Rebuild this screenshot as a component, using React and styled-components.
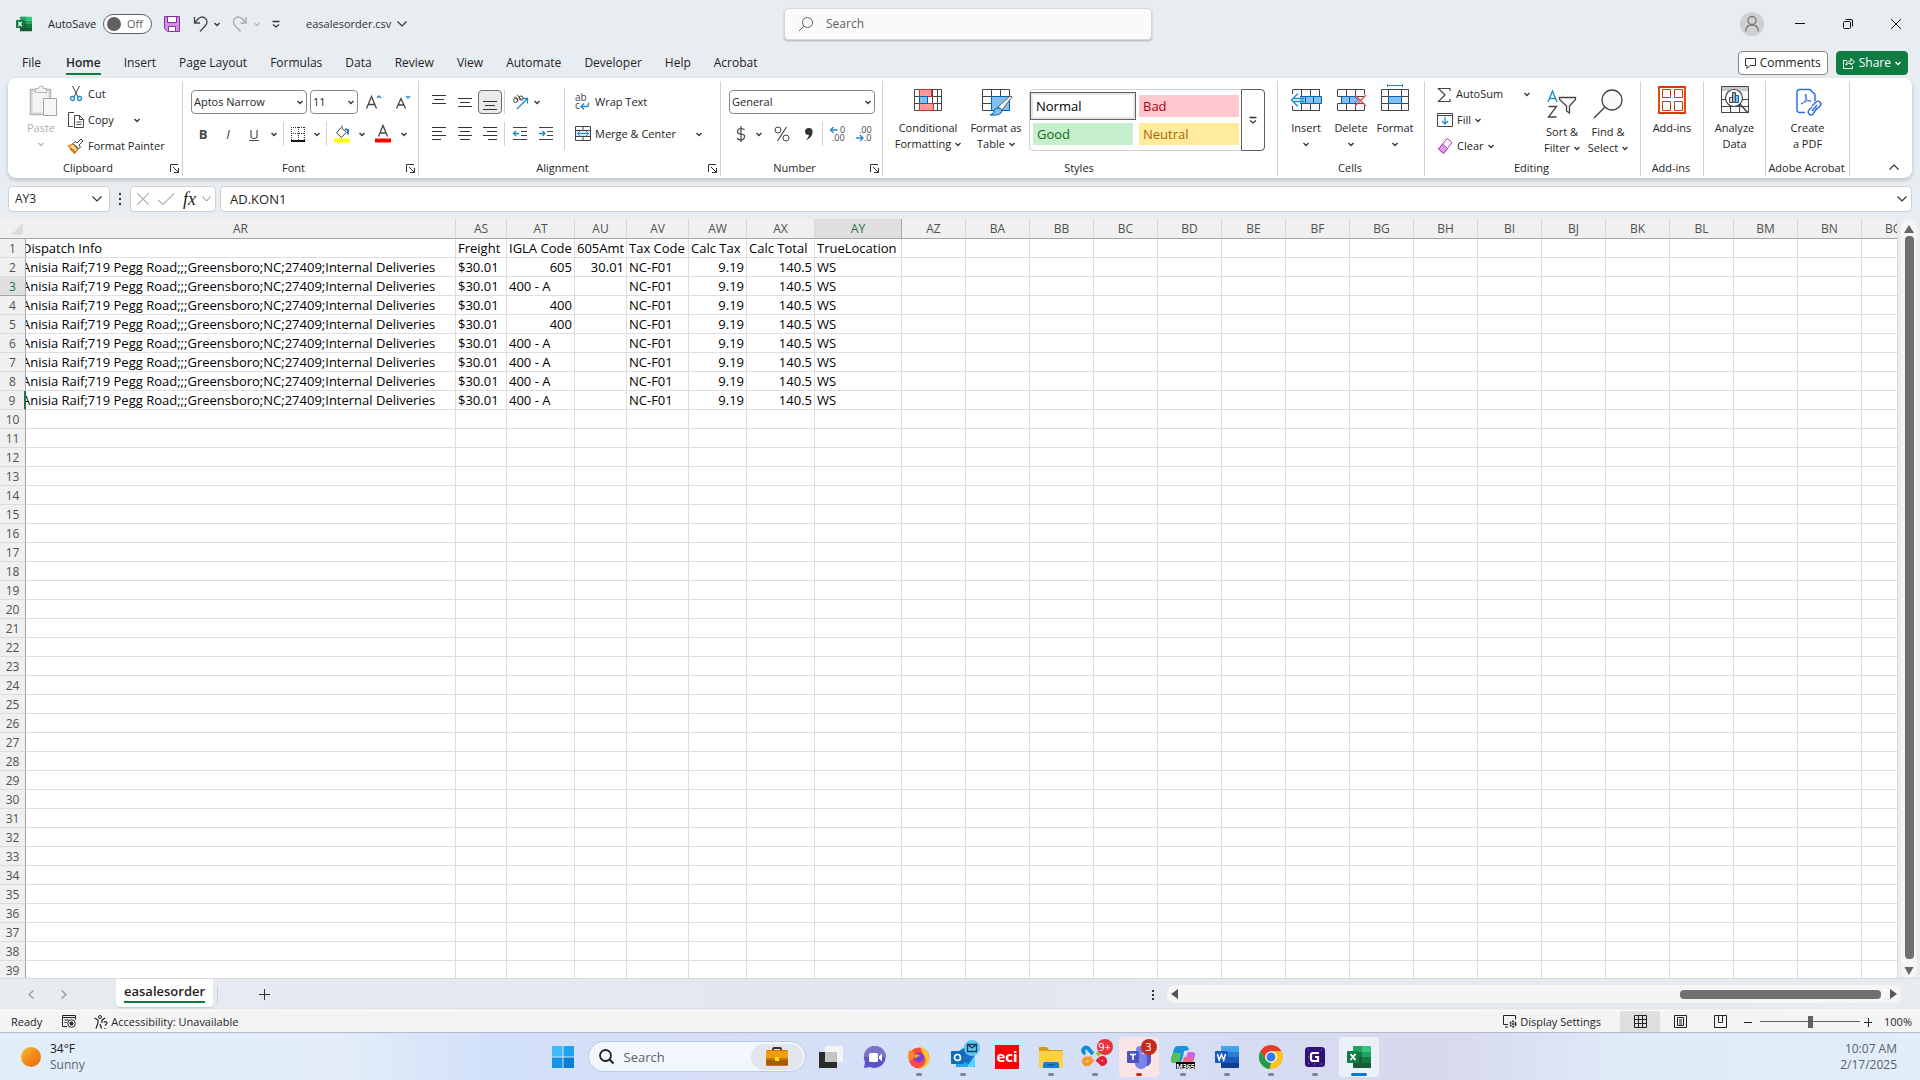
// src/App.jsx
import { useState } from "react";
import styled, { createGlobalStyle, css } from "styled-components";

const GlobalStyle = createGlobalStyle`
  *, *::before, *::after { box-sizing: border-box; }
  body {
    margin: 0;
    background: #e8edf1;
    color: #242424;
    font: 11px/16px "Open Sans", "Noto Sans", sans-serif;
  }
  button, input, select {
    font: inherit;
    color: inherit;
    background: none;
    border: 0;
    padding: 0;
    margin: 0;
    outline: 0;
  }
  svg { display: block; flex: none; overflow: visible; }
  svg text { font-family: "Open Sans", sans-serif; }
`;

const Window = styled.div`
  display: flex;
  flex-direction: column;
  height: 100vh;
  overflow: hidden;
`;

/* ---------- title bar ---------- */

const TitleBar = styled.header`
  display: grid;
  grid-template-columns: 1fr minmax(200px, 368px) 1fr;
  align-items: center;
  height: 48px;
  padding-left: 16px;
`;

const QuickAccess = styled.div`
  display: flex;
  align-items: center;
  gap: 12px;
`;

const AutoSave = styled.label`
  display: flex;
  align-items: center;
  gap: 7px;
  margin-left: 4px;
`;

const Toggle = styled.span`
  display: flex;
  align-items: center;
  gap: 6px;
  width: 49px;
  height: 20px;
  padding: 0 3px;
  border: 1px solid #616161;
  border-radius: 10px;
  background: #fff;
  color: #616161;

  input {
    appearance: none;
    width: 14px;
    height: 14px;
    border-radius: 50%;
    background: #616161;
  }
`;

const IconButton = styled.button`
  display: inline-flex;
  align-items: center;
  justify-content: center;
  gap: 6px;
  height: 24px;
  flex: none;
  width: ${({ $w }) => ($w ? `${$w}px` : "auto")};
  color: ${({ $dim }) => ($dim ? "#a8a8a8" : "#333")};
`;

const FileName = styled(IconButton)`
  margin-left: 14px;
`;

const TopSearch = styled.label`
  display: flex;
  align-items: center;
  gap: 13px;
  height: 32px;
  padding: 0 14px;
  border-radius: 4px;
  background: #fafafa;
  border: 1px solid #d5d8db;
  box-shadow: 0 1px 2px rgba(0, 0, 0, 0.25);
  font-size: 12px;
  color: #616161;

  input { flex: 1; min-width: 0; }
  input::placeholder { color: #616161; opacity: 1; }
`;

const WindowControls = styled.div`
  display: flex;
  justify-content: flex-end;
  align-items: center;
`;

const Avatar = styled.button`
  display: flex;
  align-items: center;
  justify-content: center;
  width: 24px;
  height: 24px;
  margin-right: 12px;
  border-radius: 50%;
  background: #d1d1d1;
  color: #777;
`;

const ControlButton = styled.button`
  display: flex;
  align-items: center;
  justify-content: center;
  width: 48px;
  height: 48px;
`;

/* ---------- tabs ---------- */

const TabRow = styled.nav`
  display: flex;
  align-items: center;
  height: 30px;
  padding: 0 12px 0 22px;
  font-size: 12px;
`;

const TabList = styled.div`
  display: flex;
  flex: 1;
  gap: 23px;
`;

const Tab = styled.button`
  height: 24px;
  line-height: 20px;
  border-top: 2px solid transparent;
  border-bottom: 2px solid ${({ $active }) => ($active ? "#107c41" : "transparent")};
  font-weight: ${({ $active }) => ($active ? 600 : 400)};

  &:first-child { margin-right: 2px; }
`;

const ActionButton = styled.button`
  display: flex;
  align-items: center;
  justify-content: center;
  gap: 4px;
  height: 24px;
  margin-left: 8px;
  padding: 0 ${({ $primary }) => ($primary ? 6 : 6)}px;
  border: 1px solid ${({ $primary }) => ($primary ? "#107c41" : "#8a8a8a")};
  border-radius: 4px;
  background: ${({ $primary }) => ($primary ? "#107c41" : "#fff")};
  color: ${({ $primary }) => ($primary ? "#fff" : "#242424")};
`;

/* ---------- ribbon ---------- */

const Ribbon = styled.section`
  display: flex;
  flex: none;
  height: 100px;
  margin: 0 8px;
  padding: 3px 0 2px;
  border-radius: 8px;
  background: #fff;
  box-shadow: 0 2px 4px rgba(0, 0, 0, 0.2);
`;

const Group = styled.div`
  display: flex;
  flex-direction: column;
  flex: none;
  width: ${({ $w }) => $w}px;
  border-right: 1px solid #d1d1d1;
`;

const GroupBody = styled.div`
  display: flex;
  flex: 1;
  padding-left: ${({ $pad = 0 }) => $pad}px;
  justify-content: ${({ $center }) => ($center ? "center" : "flex-start")};
`;

const GroupFooter = styled.div`
  display: flex;
  align-items: center;
  height: 16px;
  padding-right: 2px;

  span { flex: 1; text-align: center; white-space: nowrap; }
`;

const Rows = styled.div`
  display: flex;
  flex-direction: column;
  padding-top: ${({ $top = 0 }) => $top}px;
  padding-left: ${({ $left = 0 }) => $left}px;
`;

const Row = styled.div`
  display: flex;
  align-items: center;
  height: ${({ $h = 26 }) => $h}px;
  gap: ${({ $gap = 0 }) => $gap}px;
`;

const BigButton = styled.button`
  display: flex;
  flex-direction: column;
  align-items: center;
  flex: none;
  width: ${({ $w }) => $w}px;
  color: ${({ $dim }) => ($dim ? "#b0b0b0" : "#242424")};
  white-space: nowrap;

  > svg { margin: 3px 0 2px; }
  > span {
    display: flex;
    align-items: center;
    justify-content: center;
    gap: 4px;
    height: 16px;
  }
`;

const SmallButton = styled.button`
  display: flex;
  align-items: center;
  gap: 4px;
  height: 24px;
  width: ${({ $w }) => ($w ? `${$w}px` : "auto")};
  white-space: nowrap;
`;

const Glyph = styled.button`
  display: flex;
  align-items: center;
  justify-content: center;
  flex: none;
  width: ${({ $w = 26 }) => $w}px;
  height: 24px;
  font-size: 13px;
  color: #444;
  ${({ $pressed }) =>
    $pressed &&
    css`
      border: 1px solid #6e6e6e;
      border-radius: 4px;
      background: #ebebeb;
    `}
`;

const Divider = styled.span`
  width: 1px;
  height: ${({ $h = 24 }) => $h}px;
  margin: 0 ${({ $m = 2 }) => $m}px;
  background: #d1d1d1;
`;

const SelectBox = styled.span`
  display: flex;
  align-items: center;
  flex: none;
  width: ${({ $w }) => $w}px;
  height: 24px;
  padding: 0 3px 0 2px;
  border: 1px solid #8a8a8a;
  border-radius: 4px;

  select {
    flex: 1;
    min-width: 0;
    appearance: none;
  }
`;

const Gallery = styled.div`
  display: flex;
  height: 62px;
  margin: 8px 0 0 2px;
  border: 1px solid #d1d1d1;
  border-radius: 4px;
`;

const Tiles = styled.div`
  display: grid;
  grid-template-columns: 106px 100px;
  grid-template-rows: 28px 28px;
  column-gap: 3px;
  align-items: center;
  padding: 2px 3px 2px 0;
`;

const StyleTile = styled.button`
  height: 22px;
  margin: 0 ${({ $inset }) => ($inset ? 3 : 0)}px;
  padding-left: 4px;
  text-align: left;
  font-size: 13px;
  background: ${({ $bg }) => $bg};
  color: ${({ $fg }) => $fg};
  ${({ $selected }) =>
    $selected &&
    css`
      height: 28px;
      margin: 0;
      padding-left: 5px;
      border: 1px solid #616161;
      box-shadow: inset 0 0 0 2px #e6e6e6;
    `}
`;

const GalleryMore = styled.button`
  display: flex;
  align-items: center;
  justify-content: center;
  width: 24px;
  margin: -1px;
  border: 1px solid #616161;
  border-radius: 0 4px 4px 0;
`;

const CollapseRibbon = styled.button`
  display: flex;
  align-items: center;
  align-self: flex-end;
  height: 18px;
  margin: 0 13px 0 auto;
`;

/* ---------- formula bar ---------- */

const FormulaBar = styled.div`
  display: flex;
  align-items: center;
  padding: 8px 8px 7px;
`;

const BarBox = styled.div`
  display: flex;
  align-items: center;
  height: 26px;
  padding: 0 7px 0 6px;
  border: 1px solid #d1d1d1;
  border-radius: 4px;
  background: #fff;
  font-size: 12px;
  gap: 9px;
  width: ${({ $w }) => $w}px;

  input { flex: 1; min-width: 0; }
`;

const FormulaBox = styled(BarBox)`
  flex: 1;
  width: auto;
  margin-left: 4px;
  padding: 0 4px 0 9px;
  font-size: 13px;
`;

const BarDots = styled.span`
  width: 20px;
  display: flex;
  justify-content: center;
`;

/* ---------- grid ---------- */

const SheetArea = styled.main`
  display: flex;
  flex: 1;
  min-height: 0;
`;

const GridClip = styled.div`
  flex: 1;
  min-width: 0;
  overflow: hidden;
  background: #fff;
  border-right: 1px solid #dedede;
`;

const Sheet = styled.table`
  table-layout: fixed;
  border-collapse: separate;
  border-spacing: 0;
  width: ${({ $w }) => $w}px;
  font: 13px/17px "Open Sans", sans-serif;
  color: #000;
`;

const ColumnHead = styled.th`
  height: 20px;
  padding: 0;
  border-right: 1px solid ${({ $active }) => ($active ? "#a6a6a6" : "#d8d8d8")};
  border-bottom: 1px solid #a6a6a6;
  background: ${({ $active }) => ($active ? "#dfdfdf" : "#f0f0f0")};
  color: ${({ $active }) => ($active ? "#217346" : "#505050")};
  font: 12px/18px "Open Sans", sans-serif;
`;

const Corner = styled.th`
  height: 20px;
  padding: 0 3px 0 0;
  border-bottom: 1px solid #a6a6a6;
  background: #f0f0f0;

  svg { margin-left: auto; }
`;

const RowHead = styled.th`
  height: 19px;
  padding: 1px 0 0;
  border-right: ${({ $mark }) => ($mark ? "2px solid #217346" : "1px solid #a6a6a6")};
  border-bottom: 1px solid ${({ $active }) => ($active ? "#a6a6a6" : "#dcdcdc")};
  background: ${({ $active }) => ($active ? "#dfdfdf" : "#f0f0f0")};
  color: ${({ $active }) => ($active ? "#217346" : "#505050")};
  font: 12px/17px "Open Sans", sans-serif;
`;

const Cell = styled.td`
  height: 19px;
  padding: 1px 2px 0;
  border-right: 1px solid #dedede;
  border-bottom: 1px solid #dedede;
  text-align: ${({ $align = "left" }) => $align};
  text-indent: ${({ $scrolled }) => ($scrolled ? "-6px" : "0")};
  white-space: nowrap;
  overflow: hidden;
`;

const VScroll = styled.div`
  display: flex;
  flex-direction: column;
  align-items: center;
  gap: 3px;
  width: 16px;
  margin: 0 3px 0 3px;
  padding: 6px 0 2px;
  border-radius: 8px;
  background: #f5f5f5;
`;

const VThumb = styled.span`
  flex: 1;
  width: 9px;
  border-radius: 4px;
  background: #707070;
`;

/* ---------- sheet tabs and status ---------- */

const SheetBar = styled.div`
  display: flex;
  flex: none;
  height: 33px;
  padding: 0 19px;
  border-top: 1px solid #d9dcdf;
  border-bottom: 1px solid #fff;
  background: linear-gradient(90deg, #e8ecf1, #e3e6ee 45%, #e8ecf1);
`;

const SheetNav = styled.div`
  display: flex;
  align-items: center;
  gap: 9px;
  width: 97px;
`;

const SheetTab = styled.button`
  height: 28px;
  padding: 0 8px;
  border-radius: 0 0 4px 4px;
  background: #fff;
  font-size: 13px;
  font-weight: 600;
  box-shadow: 0 1px 1px rgba(0, 0, 0, 0.15);

  span {
    display: block;
    line-height: 20px;
    margin-bottom: 3px;
    border-bottom: 2px solid #107c41;
  }
`;

const SheetActions = styled.div`
  display: flex;
  align-items: center;
  flex: 1;
`;

const HScroll = styled.div`
  display: flex;
  align-items: center;
  width: 39%;
  height: 18px;
  margin: 6px 0 0 4px;
  padding: 0 4px;
  border-radius: 8px;
  background: #f5f5f5;
`;

const HThumb = styled.span`
  width: 201px;
  height: 9px;
  margin: 0 8px 0 auto;
  border-radius: 4px;
  background: #707070;
`;

const StatusBar = styled.footer`
  display: flex;
  flex: none;
  align-items: center;
  height: 21px;
  padding: 0 8px 0 11px;
  background: #f4f4f4;
`;

const StatusItem = styled.button`
  display: flex;
  align-items: center;
  gap: 3px;
  margin-right: ${({ $mr = 0 }) => $mr}px;
  margin-left: ${({ $push }) => ($push ? "auto" : "0")};
`;

const ZoomLevel = styled.button`
  width: 28px;
  margin-left: 12px;
  text-align: right;
`;

const ViewButton = styled.button`
  display: flex;
  align-items: center;
  justify-content: center;
  width: 40px;
  height: 21px;
  background: ${({ $active }) => ($active ? "#dedede" : "transparent")};
`;

const Zoom = styled.input`
  appearance: none;
  width: 100px;
  height: 12px;
  margin: 0 4px;
  background: linear-gradient(#616161, #616161) center / 100% 1px no-repeat;

  &::-webkit-slider-thumb {
    appearance: none;
    width: 5px;
    height: 12px;
    background: #616161;
  }
`;

/* ---------- taskbar ---------- */

const Taskbar = styled.div`
  display: grid;
  grid-template-columns: 1fr auto 1fr;
  flex: none;
  align-items: center;
  height: 48px;
  padding-left: 1px;
  border-top: 1px solid #b3bac8;
  background: linear-gradient(
    90deg,
    #e1eef8 0%,
    #e2edf8 18%,
    #d3e1fa 25%,
    #d6def6 38%,
    #d3e2f8 50%,
    #d6def4 62%,
    #d7d9ed 75%,
    #dfeaf7 84%,
    #e1eef8 100%
  );
`;

const Weather = styled.button`
  display: flex;
  align-items: center;
  gap: 9px;
  padding-left: 20px;
  text-align: left;
  font-size: 12px;
  color: #5f6670;

  b { display: block; font-weight: 400; color: #1b1b1b; }
`;

const Sun = styled.span`
  width: 20px;
  height: 20px;
  border-radius: 50%;
  background: linear-gradient(135deg, #f3c433, #f28a1b 50%, #ee6a0c);
`;

const Apps = styled.div`
  display: flex;
  align-items: center;
`;

const TaskButton = styled.button`
  display: flex;
  flex-direction: column;
  align-items: center;
  justify-content: center;
  position: relative;
  width: 40px;
  height: 40px;
  margin: 0 2px;
  border-radius: 4px;
  background: ${({ $bg = "transparent" }) => $bg};
`;

/* running marker under the icon */
const Dot = styled.span`
  position: absolute;
  bottom: 1px;
  width: ${({ $wide }) => ($wide ? 16 : 6)}px;
  height: 3px;
  border-radius: 2px;
  background: ${({ $color = "#7c8290" }) => $color};
`;

const Badge = styled.span`
  position: absolute;
  top: 2px;
  right: 2px;
  display: flex;
  align-items: center;
  justify-content: center;
  width: 16px;
  height: 16px;
  border-radius: 50%;
  background: ${({ $bg = "#c42b1c" }) => $bg};
  color: #fff;
  font-size: 11px;
`;

const TaskSearch = styled.label`
  display: flex;
  align-items: center;
  gap: 10px;
  width: 218px;
  height: 31px;
  margin: 0 3px;
  padding: 0 2px 0 10px;
  border: 1px solid #bccbe3;
  border-radius: 16px;
  background: #f2f6fd;
  font-size: 13px;

  input { flex: 1; min-width: 0; }
  input::placeholder { color: #5b5f66; opacity: 1; }
`;

const Highlight = styled.span`
  display: flex;
  align-items: center;
  justify-content: center;
  width: 52px;
  height: 26px;
  border-radius: 13px;
  background: #e2e6ec;
`;

const Clock = styled.time`
  padding-right: 23px;
  text-align: right;
  font-size: 12px;
  color: #5b6068;
`;

/* ---------- icons ---------- */

const Svg = ({ w = 16, h = w, vw = w, vh = h, children, ...rest }) => (
  <svg width={w} height={h} viewBox={`0 0 ${vw} ${vh}`} fill="none" stroke="#444" aria-hidden="true" {...rest}>
    {children}
  </svg>
);

const Chevron = ({ color = "#333" }) => (
  <Svg w={6} stroke={color}>
    <path d="M0.5 2 3 4.5 5.5 2" strokeWidth="1.3" />
  </Svg>
);

const BarChevron = ({ up }) => (
  <Svg w={10} h={6} stroke="#333">
    <path d={up ? "M0.5 5.5 5 1l4.5 4.5" : "M0.5 0.5 5 5 9.5 0.5"} strokeWidth="1.2" />
  </Svg>
);

const Launcher = () => (
  <IconButton $w={12} aria-label="More options">
    <Svg w={9} stroke="#333"><path d="M0.5 8V0.5H8M3 3l5 5M8.5 4v4.5H4" /></Svg>
  </IconButton>
);

const ExcelIcon = ({ size = 16 }) => (
  <Svg w={size} vw={24} vh={24} stroke="none">
    <path d="M6 1h9v6H6z" fill="#21a366" /><path d="M15 1h8a1 1 0 0 1 1 1v5h-9z" fill="#33c481" />
    <path d="M6 7h9v6H6z" fill="#107c41" /><path d="M15 7h9v5h-9z" fill="#21a366" />
    <path d="M6 12h9v11H7a1 1 0 0 1-1-1z" fill="#185c37" /><path d="M15 12h9v6h-9z" fill="#107c41" />
    <path d="M15 18h9v4a1 1 0 0 1-1 1h-8z" fill="#185c37" />
    <rect y="6" width="12" height="12" rx="1" fill="#107c41" />
    <path d="m3.500 9 5 6M8.500 9l-5 6" stroke="#fff" strokeWidth="1.800" />
  </Svg>
);

const WordIcon = () => (
  <Svg w={24} stroke="none">
    <path d="M6 1h17a1 1 0 0 1 1 1v5H6z" fill="#41a5ee" /><path d="M6 7h18v5H6z" fill="#2b7cd3" />
    <path d="M6 12h18v6H6z" fill="#185abd" /><path d="M6 18h18v4a1 1 0 0 1-1 1H7a1 1 0 0 1-1-1z" fill="#103f91" />
    <rect y="6" width="13" height="12" rx="1" fill="#185abd" />
    <path d="m2.500 9 1.700 6L6.500 9.500 8.700 15l1.800-6" stroke="#fff" strokeWidth="1.500" />
  </Svg>
);

const LinesIcon = ({ lines }) => (
  <Svg w={16} stroke="#333">
    {lines.map(([x, y, w]) => <path key={y} d={`M${x} ${y}.5h${w}`} />)}
  </Svg>
);

const ALIGN_TOP = [[1, 1, 14], [3, 5, 10], [1, 9, 14]];
const ALIGN_MIDDLE = [[1, 4, 14], [3, 8, 10], [1, 12, 14]];
const ALIGN_BOTTOM = [[1, 7, 14], [3, 11, 10], [1, 15, 14]];
const ALIGN_LEFT = [[1, 1, 14], [1, 5, 10], [1, 9, 14], [1, 13, 9]];
const ALIGN_CENTER = [[1, 1, 14], [3, 5, 10], [1, 9, 14], [3, 13, 10]];
const ALIGN_RIGHT = [[1, 1, 14], [5, 5, 10], [1, 9, 14], [6, 13, 9]];

const PasteIcon = () => (
  <Svg w={26} h={34} stroke="#b5b5b5">
    <path d="M2.500 5.500h20v25h-20z" fill="#e3e3e3" strokeWidth="1.500" />
    <path d="M5 8h15v20H5z" fill="#f3f3f3" stroke="none" />
    <path d="M7.500 8.500v-4h3a2.500 2.500 0 0 1 5 0h3v4z" fill="#f3f3f3" />
    <path d="M15.500 14.500h13v17h-13z" fill="#f6f6f6" stroke="#a5a5a5" />
  </Svg>
);

const CutIcon = () => (
  <Svg>
    <path d="m4.500 0 5.500 11M11.500 0 6 11" />
    <circle cx="4.500" cy="12.500" r="2" stroke="#1e8bcd" strokeWidth="1.300" /><circle cx="11.500" cy="12.500" r="2" stroke="#1e8bcd" strokeWidth="1.300" />
  </Svg>
);

const CopyIcon = () => (
  <Svg>
    <path d="M5 14.500H0.500v-14H6" />
    <path d="M6.500 3.500h5l4 4v8h-9zM11.500 3.500v4h4M8.500 10h5M8.500 12.500h5" fill="#fff" />
  </Svg>
);

const PainterIcon = () => (
  <Svg>
    <path d="M0.500 8 5 6l5 5-3.500 4.500z" fill="#fbd9ae" stroke="#e07a10" strokeWidth="1.300" />
    <path d="m2.500 10.500 4.500 4" stroke="#e07a10" strokeWidth="2.500" />
    <path d="m5 5.500 2-2 2 1.500 4-4 2 2-4 4 1.500 2-2 2z" fill="#fff" stroke="#444" /><path d="m7 7.500 3 3" />
  </Svg>
);

const BordersIcon = () => (
  <Svg w={16}>
    <path d="M1.500 1v13M8.500 1v13M14.500 1v13M1 1.500h14M1 7.500h14" stroke="#333" strokeDasharray="1 1" />
    <path d="M1 15h14" stroke="#111" strokeWidth="2" />
  </Svg>
);

const FillColorIcon = () => (
  <Svg w={16} h={18}>
    <path d="M7 2.500 2.500 8l5 4.500L12.500 7 8 3.500V0.500" /><path d="m11 4 3 1v4.500" stroke="#1e6fb8" strokeWidth="1.800" />
    <path d="M0 15.500h16" stroke="#ffff00" strokeWidth="4" />
  </Svg>
);

const FontColorIcon = () => (
  <Svg w={16} h={18}>
    <path d="M3.500 11.500 8 0.500l4.500 11M5 8h6" strokeWidth="1.300" />
    <path d="M0 15.500h16" stroke="#ff0000" strokeWidth="4" />
  </Svg>
);

const FontSizeIcon = ({ up }) => (
  <Svg w={16} h={16}>
    <path d={up ? "M0.500 14.500 5.500 2.500l5 12M2.500 10.500h6" : "M1.500 14.500 6 4.500l4.500 10M3 11h6"} strokeWidth="1.300" />
    <path d={up ? "m11 4 2-2 2 2" : "m11 2 2 2 2-2"} stroke="#1e8bcd" strokeWidth="1.300" />
  </Svg>
);

const OrientationIcon = () => (
  <Svg w={17}>
    <circle cx="3.500" cy="6.500" r="2" /><path d="M2 3.500q3-2 4 4" />
    <path d="m5 0.500 5 6" /><circle cx="9" cy="4" r="2" />
    <path d="M5 15 15 5M10.500 4.500H15.500V9.500" stroke="#1e8bcd" strokeWidth="1.300" />
  </Svg>
);

const IndentIcon = ({ right }) => (
  <Svg w={16}>
    <path d="M1 1.500h14M9 5.500h6M9 9.500h6M1 13.500h14" />
    <path d={right ? "M1 7.500h6M4.500 5l2.500 2.500L4.500 10" : "M1.500 7.500H7M4 5 1.500 7.500 4 10"} stroke="#1e8bcd" strokeWidth="1.300" />
  </Svg>
);

const WrapIcon = () => (
  <Svg w={16}>
    <text x="0" y="7" fontSize="10" fill="#444" stroke="none">ab</text>
    <text x="0" y="15" fontSize="10" fill="#444" stroke="none">c</text>
    <path d="M13.500 8.500v2q0 2-2 2H6.500M9 9.500l-3 3 3 3" stroke="#1e8bcd" strokeWidth="1.300" />
  </Svg>
);

const MergeIcon = () => (
  <Svg w={16}>
    <path d="M0.500 0.500h15v14h-15zM0.500 4.500h15M0.500 10.500h15M8 1v3M8 11v3" />
    <path d="M1 5h14v5H1z" fill="#d7ebfa" stroke="none" />
    <path d="M2.500 7.500h11M5 5 2.500 7.500 5 10M11 5l2.500 2.500L11 10" stroke="#1e8bcd" />
  </Svg>
);

const DecimalIcon = ({ up }) => (
  <Svg w={16}>
    <text x={up ? 10 : 3} y="7" fontSize="9" fill="#444" stroke="none">{up ? "0" : ".00"}</text>
    <text x={up ? 2 : 8} y="15" fontSize="9" fill="#444" stroke="none">{up ? ".00" : ".0"}</text>
    <path d={up ? "M0.500 4h7M3.500 1l-3 3 3 3" : "M0 12h7M4 9l3 3-3 3"} stroke="#1e8bcd" strokeWidth="1.300" />
  </Svg>
);

const ConditionalIcon = () => (
  <Svg w={28} h={34}>
    <path d="M0.500 5.500h27v21h-27zM0.500 12.500h27M0.500 19.500h27M5.500 5.500v21M18.500 5.500v21M23.500 5.500v21" stroke="#444" />
    <path d="M5.500 5.500h12v7h-12zM5.500 19.500h14v7h-14z" fill="#ff9a9c" stroke="#e02b20" /><path d="M5.500 12.500h8v7h-8z" fill="#83beec" stroke="#0063b1" />
  </Svg>
);

const FormatTableIcon = () => (
  <Svg w={28} h={34}>
    <path d="M0.500 5.500h27v21h-27zM0.500 12.500h27M0.500 19.500h27M9.500 5.500v21M18.500 5.500v21" />
    <path d="M9.500 12.500h18v14h-18z" fill="#83beec" stroke="#0063b1" />
    <path d="m28 12 2 1-10 13-4-3z" fill="#fff" stroke="#555" />
    <path d="M15 24q5 0 5 3-1 5-12 4 4-1 4-4 0-2 3-3z" fill="#83beec" stroke="#0063b1" />
  </Svg>
);

const InsertIcon = () => (
  <Svg w={32} h={34}>
    <path d="M2.500 5.500h27v21h-27zM11.500 5.500v21M20.500 5.500v21" fill="#fafafa" />
    <path d="M8.500 12.500h23v7h-23z" fill="#83beec" stroke="#0063b1" /><path d="M15.500 12.500v7M23.500 12.500v7" stroke="#0063b1" />
    <path d="M0 10h10v12H0z" fill="#fff" stroke="none" />
    <path d="M14 14.500H3M14 17.500H3M8 9.500 1.500 16 8 22.500" stroke="#1e8bcd" strokeWidth="1.400" />
  </Svg>
);

const DeleteIcon = () => (
  <Svg w={28} h={34}>
    <path d="M0.500 12.500v-7h27v5M0.500 19.500v7h27v-5M9.500 5.500v7M18.500 5.500v7M9.500 19.500v7M18.500 19.500v7M0.500 12.500h27M0.500 19.500h27" fill="#fafafa" />
    <path d="M4.500 12.500h13l4 3.500-4 3.500h-13zM12.500 12.500v7" fill="#83beec" stroke="#0063b1" />
    <path d="m18 11 11 11M29 11 18 22" stroke="#f04848" strokeWidth="1.400" />
  </Svg>
);

const FormatCellsIcon = () => (
  <Svg w={28} h={34}>
    <path d="M0.500 5.500h27v21h-27zM0.500 12.500h27M0.500 19.500h27M7.500 5.500v21M20.500 5.500v21" fill="#fafafa" />
    <path d="M7.500 12.500h13v7h-13z" fill="#83beec" stroke="#0063b1" />
    <path d="M6.500 1.500h15M6.500 0v3M21.500 0v3" stroke="#1e8bcd" />
  </Svg>
);

const SortIcon = () => (
  <Svg w={30} h={34}>
    <path d="m1 14 4.500-11L10 14M2.500 10.500h6" stroke="#1e8bcd" strokeWidth="1.400" />
    <path d="M1.500 18.500h8L1.500 29h8" strokeWidth="1.300" />
    <path d="M12.500 9.500h16v2l-6 6.500v7l-3-2v-5l-7-6.500z" fill="#fafafa" strokeWidth="1.300" />
  </Svg>
);

const FindIcon = () => (
  <Svg w={30} h={34}>
    <circle cx="19" cy="12" r="10" fill="#fafafa" strokeWidth="1.300" /><path d="M12 19 1 30" strokeWidth="1.400" />
  </Svg>
);

const AddInsIcon = () => (
  <Svg w={28} h={34} stroke="#d83b01">
    <path d="M1 3h26v26H1z" strokeWidth="1.800" />
    <path d="M4.500 5.500h8v8h-8zM16.500 5.500h8v8h-8zM4.500 17.500h8v9h-8zM16.500 17.500h8v9h-8z" />
  </Svg>
);

const AnalyzeIcon = () => (
  <Svg w={28} h={34}>
    <path d="M0.500 2.500h27v26h-27zM0.500 15.500h27M0.500 22.500h27M9.500 6v22M18.500 6v22" fill="#fafafa" />
    <path d="M1 3h26v4H1z" fill="#c8c8c8" stroke="none" />
    <circle cx="13" cy="14" r="8.500" fill="#fff" strokeWidth="1.200" /><path d="m19 20 8 9" strokeWidth="1.500" />
    <path d="M8.500 13.500h3v5h-3z" fill="#ddd" /><path d="M11.500 8.500h3v10h-3z" fill="#aaa" /><path d="M14.500 11.500h3v7h-3z" fill="#83beec" stroke="#0063b1" />
  </Svg>
);

const PdfIcon = () => (
  <Svg w={24} h={34} stroke="#2f6fe0">
    <path d="M9 28.500H3.500a2.500 2.500 0 0 1-2.500-2.500V8a2.500 2.500 0 0 1 2.500-2.500H14l5 5V17" strokeWidth="1.500" />
    <path d="M5 20c4-1 6-6 5-10-2 1 1 8 5 7-3-1-7 1-10 3z" />
    <path d="m16 22 4-4a2.500 2.500 0 0 1 4 4l-3 3M21 24l-4 6a2.500 2.500 0 0 1-4-4l3-3M16 27l5-6" strokeWidth="1.500" />
  </Svg>
);

const SumIcon = () => (
  <Svg w={15}><path d="M13 4V1.500H1.500L8 8l-6.500 6.500H13V12" strokeWidth="1.200" /></Svg>
);
const FillIcon = () => (
  <Svg w={16} h={14}>
    <path d="M0.500 0.500h15v13h-15zM0.500 2.500h15" /><path d="M8 4v7M5 8l3 3 3-3" stroke="#1e8bcd" strokeWidth="1.300" />
  </Svg>
);
const ClearIcon = () => (
  <Svg w={16}>
    <path d="m10 0.500 5 4-8.500 11-5-4.500z" fill="#fff" stroke="#a33eb0" /><path d="m5.500 6 5 4.500-4 5-5-4.500z" fill="#dc9be0" stroke="#a33eb0" />
  </Svg>
);

const BriefcaseIcon = () => (
  <Svg w={24} h={20} stroke="none">
    <path d="M8 3.500V2q0-1 1-1h6q1 0 1 1v1.500" stroke="#4a2c14" strokeWidth="1.800" />
    <rect x="1" y="3" width="22" height="16" rx="1.500" fill="#c8780a" /><path d="M1 4h22v7H1z" fill="#f39c12" />
    <path d="M1 13h22v5H1z" fill="#a55c08" /><rect x="10" y="10" width="4" height="4" fill="#ffe500" />
  </Svg>
);

const StartIcon = () => (
  <Svg w={24} stroke="none">
    <path d="M1 1h10.500v10.500H1z" fill="#3ebcf5" /><path d="M12.500 1H23v10.500H12.500z" fill="#21a3ec" />
    <path d="M1 12.500h10.500V23H1z" fill="#1496e4" /><path d="M12.500 12.500H23V23H12.500z" fill="#0a7fd8" />
  </Svg>
);

const TaskViewIcon = () => (
  <Svg w={24} stroke="none">
    <path d="M0 7h18v16H0z" fill="#2b2b2b" /><path d="M6 1h18v16H6z" fill="#f4f4f4" />
    <path d="M6 7h12v10H6z" fill="#c2c4c7" />
  </Svg>
);

const ChatIcon = () => (
  <Svg w={24} stroke="none">
    <path d="M12 1a11 11 0 1 1-5 21l-6 1 1-6A11 11 0 0 1 12 1z" fill="#5b52cc" />
    <path d="M12 1a11 11 0 0 1 11 11H1A11 11 0 0 1 12 1z" fill="#7a74c8" />
    <rect x="6" y="8" width="9" height="9" rx="1.500" fill="#fff" /><path d="m16 11.500 3-3v8l-3-3z" fill="#fff" />
  </Svg>
);

const FirefoxIcon = () => (
  <Svg w={24} stroke="none">
    <circle cx="12" cy="13" r="10.500" fill="#ff4a3d" />
    <path d="M14 0c1 3 5 4 7 8s2 9-1 12-6 4-9 3c6-1 9-5 7-11-1-3-5-6-4-12z" fill="#ffc52e" />
    <path d="M2 5c2 1 3 2 6 2-2 2-2 3 0 4l-3 4-3 1c-1-4-1-8 0-11z" fill="#ff8a1c" />
    <circle cx="12" cy="12.500" r="5" fill="#7a3fd6" /><path d="M7 10c2-1 5-1 6 1-2 0-3 1-3 2-2 0-3-1-3-3z" fill="#ff9a1f" />
  </Svg>
);

const OutlookIcon = () => (
  <Svg w={24} stroke="none">
    <path d="M5 8 14 2l10 6v14H5z" fill="#1a6fc4" /><path d="M5 13l19 9H7q-2 0-2-2z" fill="#28a8ea" /><path d="M24 10v10q0 2-2 2h-6z" fill="#50d9ff" />
    <rect y="6" width="13" height="13" rx="1" fill="#0f6cbd" /><circle cx="6.500" cy="12.500" r="3" stroke="#fff" strokeWidth="1.700" />
    <circle cx="21" cy="3" r="8" fill="#5cc6ee" /><path d="M16.500-0.500h9v7h-9zM16.500-0.500 21 3l4.500-3.500" stroke="#173a55" strokeWidth="1.300" />
  </Svg>
);

const EciIcon = () => (
  <Svg w={24} stroke="none">
    <path d="M0 0h24v24H0z" fill="#f60505" />
    <text x="12" y="17" fontSize="15" fontWeight="700" textAnchor="middle" fill="#fff">eci</text>
  </Svg>
);

const ExplorerIcon = () => (
  <Svg w={24} stroke="none">
    <path d="M0 3q0-1 1-1h7l2 3h13q1 0 1 1v3H0z" fill="#dd9a0a" /><path d="M0 6h24v16q0 1-1 1H1q-1 0-1-1z" fill="#fdd04a" />
    <path d="M4 23v-4q0-2 2-2h12q2 0 2 2v4z" fill="#1681cf" /><path d="M8 19h8v1.500H8z" fill="#0b5f9e" />
  </Svg>
);

const PetalsIcon = () => (
  <Svg w={24} strokeWidth="4">
    <path d="M10 9 6 4.500a3 3 0 1 0-3.500 4" stroke="#0f8fd0" />
    <path d="m10 14-4 4.500a3 3 0 1 1-3-5h6" stroke="#f8982a" /><path d="m14 14 5 5a3 3 0 1 0-2-5" stroke="#e81e35" />
    <path d="m14 10 3-3" stroke="#8cc63f" />
  </Svg>
);

const TeamsIcon = () => (
  <Svg w={24} stroke="none">
    <circle cx="13" cy="5" r="4" fill="#7b83eb" /><path d="M14 9h10v7a5 5 0 0 1-6 5z" fill="#5059c9" />
    <path d="M7 9h13v8a6 6 0 0 1-12 2z" fill="#7b83eb" /><rect y="6" width="12" height="12" rx="1" fill="#4b53bc" />
    <path d="M3 9.500h6M6 9.500V15" stroke="#fff" strokeWidth="1.600" />
  </Svg>
);

const CopilotIcon = () => (
  <Svg w={24} stroke="none">
    <path d="M7 1h8q2 0 3 4l-5 1q-1 9-4 12H4q-5 0-4-4L3 4q1-3 4-3z" fill="#1691dd" />
    <path d="M2 8h8L8 18H4q-5 0-4-4z" fill="#54c351" /><path d="M17 7h4q4 0 3 4l-2 6q-1 3-4 3h-6z" fill="#c663e8" />
    <path d="M13 12h9l-3 7h-8z" fill="#f2668c" />
    <path d="M5 17h19v7H5z" fill="#000" />
    <text x="14.500" y="23.500" fontSize="7" fontWeight="700" textAnchor="middle" fill="#fff">M365</text>
  </Svg>
);

const ChromeIcon = () => (
  <Svg w={24} stroke="none">
    <circle cx="12" cy="12" r="12" fill="#fcc31e" /><path d="M12 0a12 12 0 0 1 10.400 6H12L6.800 15 1.600 6A12 12 0 0 1 12 0z" fill="#e33b2e" />
    <path d="m1.600 6 5.200 9 5.200 3-1.500 6A12 12 0 0 1 1.600 6z" fill="#229a49" />
    <circle cx="12" cy="12" r="5.800" fill="#fff" /><circle cx="12" cy="12" r="4.500" fill="#2f7ded" />
  </Svg>
);

const GIcon = () => (
  <Svg w={20} stroke="none">
    <rect width="20" height="20" rx="3.500" fill="#32107a" />
    <path d="M14 6H8Q6 6 6 8v4q0 2 2 2h5v-4h-3" stroke="#fff" strokeWidth="2.200" />
    <path d="M3 3h1M16 3h1M3 16h1M16 17h1M3 10h1M9 17h1" stroke="#a98be0" />
  </Svg>
);

/* ---------- data ---------- */

const TABS = ["File", "Home", "Insert", "Page Layout", "Formulas", "Data", "Review", "View", "Automate", "Developer", "Help", "Acrobat"];

const COLUMNS = [
  ["AR", 430], ["AS", 51], ["AT", 68], ["AU", 52], ["AV", 62], ["AW", 58], ["AX", 68], ["AY", 87],
  ...["AZ", "BA", "BB", "BC", "BD", "BE", "BF", "BG", "BH", "BI", "BJ", "BK", "BL", "BM", "BN", "BO"].map((c) => [c, 64]),
];
const SHEET_WIDTH = COLUMNS.reduce((sum, [, w]) => sum + w, 26);

const HEADINGS = ["Dispatch Info", "Freight", "IGLA Code", "605Amt", "Tax Code", "Calc Tax", "Calc Total", "TrueLocation"];
const DISPATCH = "Anisia Raif;719 Pegg Road;;;Greensboro;NC;27409;Internal Deliveries";
const order = (code, amount = "") => [DISPATCH, "$30.01", code, amount, "NC-F01", 9.19, 140.5, "WS"];

const ROWS = [
  HEADINGS,
  order(605, 30.01),
  order("400 - A"),
  order(400),
  order(400),
  order("400 - A"),
  order("400 - A"),
  order("400 - A"),
  order("400 - A"),
];
const ROW_COUNT = 39;

/* ---------- sections ---------- */

function Title() {
  return (
    <TitleBar>
      <QuickAccess>
        <ExcelIcon />
        <AutoSave>
          AutoSave
          <Toggle><input type="checkbox" />Off</Toggle>
        </AutoSave>
        <IconButton $w={16} aria-label="Save">
          <Svg stroke="#8a2da5">
            <path d="M0.500 0.500h15v15h-12l-3-3z" fill="#d58fe0" /><path d="M3.500 0.500h9v6h-9z" fill="#fff" /><path d="M4.500 15.500v-5h7v5z" fill="#fff" />
          </Svg>
        </IconButton>
        <IconButton aria-label="Undo">
          <Svg><path d="M2.500 1v6H8M2.500 7 6.500 2.500q4-3 7 0t0 7L8 15.500" strokeWidth="1.300" /></Svg>
          <Chevron />
        </IconButton>
        <IconButton $dim aria-label="Redo">
          <Svg stroke="#a8a8a8"><path d="M14 1v6H8.500M14 7 10 2.500Q6-0.500 3 2.500t0 7l5.500 6" strokeWidth="1.300" /></Svg>
          <Chevron color="#b8b8b8" />
        </IconButton>
        <IconButton $w={8} aria-label="Customize toolbar">
          <Svg w={8} stroke="#333"><path d="M0.500 1.500h7M1 4.500l3 2.500 3-2.500" strokeWidth="1.300" /></Svg>
        </IconButton>
        <FileName>easalesorder.csv<BarChevron /></FileName>
      </QuickAccess>
      <TopSearch>
        <Svg w={14} stroke="#616161"><circle cx="8.500" cy="5.500" r="5" /><path d="M5 9 0 14" /></Svg>
        <input type="search" placeholder="Search" aria-label="Search" />
      </TopSearch>
      <WindowControls>
        <Avatar aria-label="Account">
          <Svg w={14} h={16} stroke="#777"><circle cx="7" cy="4.500" r="4" strokeWidth="1.300" /><path d="M0.500 15.500Q1 9 7 9t6.500 6.500" strokeWidth="1.300" /></Svg>
        </Avatar>
        <ControlButton aria-label="Minimize"><Svg w={10} stroke="#111"><path d="M0 4.500h10" /></Svg></ControlButton>
        <ControlButton aria-label="Restore"><Svg w={10} stroke="#111"><rect x="0.500" y="2.500" width="7" height="7" rx="1" /><path d="M2.500 0.500H8q1.500 0 1.500 1.500v5.500" /></Svg></ControlButton>
        <ControlButton aria-label="Close"><Svg w={10} stroke="#111"><path d="m0 0 10 10M10 0 0 10" /></Svg></ControlButton>
      </WindowControls>
    </TitleBar>
  );
}

function RibbonTabs() {
  const [active, setActive] = useState("Home");
  return (
    <TabRow>
      <TabList>
        {TABS.map((tab) => (
          <Tab key={tab} $active={tab === active} onClick={() => setActive(tab)}>{tab}</Tab>
        ))}
      </TabList>
      <ActionButton>
        <Svg w={11} stroke="#333"><path d="M0.500 0.500h10v7H5l-3 3v-3H0.500z" /></Svg>
        Comments
      </ActionButton>
      <ActionButton $primary>
        <Svg w={12} stroke="#fff"><path d="M4 3.500H0.500v8h9V9M3 8q0-4 5-4V1.500L11.500 5 8 8V6Q5 6 3 8z" /></Svg>
        Share
        <Chevron color="#fff" />
      </ActionButton>
    </TabRow>
  );
}

const Drop = ({ w = 14, label = "More" }) => <Glyph $w={w} aria-label={label}><Chevron /></Glyph>;

function RibbonGroup({ name, width, pad, center, launcher, children }) {
  return (
    <Group $w={width}>
      <GroupBody $pad={pad} $center={center}>{children}</GroupBody>
      <GroupFooter><span>{name}</span>{launcher && <Launcher />}</GroupFooter>
    </Group>
  );
}

function RibbonPanel() {
  return (
    <Ribbon>
      <RibbonGroup name="Clipboard" width={175} pad={10} launcher>
        <BigButton $w={46} $dim><PasteIcon /><span>Paste</span><span><Chevron color="#b8b8b8" /></span></BigButton>
        <Rows $left={4}>
          <Row><SmallButton><CutIcon />Cut</SmallButton></Row>
          <Row $gap={16}><SmallButton><CopyIcon />Copy</SmallButton><Drop /></Row>
          <Row><SmallButton><PainterIcon />Format Painter</SmallButton></Row>
        </Rows>
      </RibbonGroup>

      <RibbonGroup name="Font" width={236} pad={8} launcher>
        <Rows $top={5}>
          <Row $h={32} $gap={3}>
            <SelectBox $w={116}>
              <select aria-label="Font"><option>Aptos Narrow</option></select><Chevron />
            </SelectBox>
            <SelectBox $w={48}>
              <select aria-label="Font size"><option>11</option></select><Chevron />
            </SelectBox>
            <Glyph aria-label="Increase font size"><FontSizeIcon up /></Glyph>
            <Glyph aria-label="Decrease font size"><FontSizeIcon /></Glyph>
          </Row>
          <Row $h={32}>
            <Glyph $w={24}><b>B</b></Glyph>
            <Glyph><i>I</i></Glyph>
            <Glyph><u>U</u></Glyph>
            <Drop />
            <Divider />
            <Glyph $w={24} aria-label="Borders"><BordersIcon /></Glyph>
            <Drop />
            <Divider />
            <Glyph $w={26} aria-label="Fill color"><FillColorIcon /></Glyph>
            <Drop />
            <Glyph $w={28} aria-label="Font color"><FontColorIcon /></Glyph>
            <Drop />
          </Row>
        </Rows>
      </RibbonGroup>

      <RibbonGroup name="Alignment" width={302} pad={7} launcher>
        <Rows $top={5}>
          <Row $h={32}>
            <Glyph aria-label="Top align"><LinesIcon lines={ALIGN_TOP} /></Glyph>
            <Glyph aria-label="Middle align"><LinesIcon lines={ALIGN_MIDDLE} /></Glyph>
            <Glyph $w={24} $pressed aria-label="Bottom align"><LinesIcon lines={ALIGN_BOTTOM} /></Glyph>
            <Divider />
            <Glyph aria-label="Orientation"><OrientationIcon /></Glyph>
            <Drop w={8} />
          </Row>
          <Row $h={32}>
            <Glyph aria-label="Align left"><LinesIcon lines={ALIGN_LEFT} /></Glyph>
            <Glyph aria-label="Center"><LinesIcon lines={ALIGN_CENTER} /></Glyph>
            <Glyph $w={24} aria-label="Align right"><LinesIcon lines={ALIGN_RIGHT} /></Glyph>
            <Divider />
            <Glyph aria-label="Decrease indent"><IndentIcon /></Glyph>
            <Glyph aria-label="Increase indent"><IndentIcon right /></Glyph>
          </Row>
        </Rows>
        <Row $h={76}><Divider $h={62} $m={5} /></Row>
        <Rows $top={5} $left={5}>
          <Row $h={32}><SmallButton><WrapIcon />Wrap Text</SmallButton></Row>
          <Row $h={32} $gap={16}><SmallButton><MergeIcon />Merge &amp; Center</SmallButton><Drop /></Row>
        </Rows>
      </RibbonGroup>

      <RibbonGroup name="Number" width={162} pad={8} launcher>
        <Rows $top={5}>
          <Row $h={32}>
            <SelectBox $w={146}>
              <select aria-label="Number format"><option>General</option></select><Chevron />
            </SelectBox>
          </Row>
          <Row $h={32}>
            <Glyph $w={23} aria-label="Currency"><Svg w={10} h={18}><path d="M8.500 5Q8 3.500 5 3.500T1.500 6.200 5 9t3.500 3T5 15t-3.500-2M5 1v16" strokeWidth="1.200" /></Svg></Glyph>
            <Drop />
            <Glyph $w={32} aria-label="Percent"><Svg w={16}><circle cx="4" cy="4" r="3" /><circle cx="12" cy="12" r="3" /><path d="M12.500 1 3.500 15" strokeWidth="1.200" /></Svg></Glyph>
            <Glyph $w={22} aria-label="Comma"><Svg w={8} h={14} stroke="none"><path d="M4 1q4 0 3.500 4.500Q7 11 1 13q3-3 3-5-4 0-4-3.500T4 1z" fill="#333" /></Svg></Glyph>
            <Divider />
            <Glyph aria-label="Increase decimal"><DecimalIcon up /></Glyph>
            <Glyph aria-label="Decrease decimal"><DecimalIcon /></Glyph>
          </Row>
        </Rows>
      </RibbonGroup>

      <RibbonGroup name="Styles" width={395} pad={8}>
        <BigButton $w={74}><ConditionalIcon /><span>Conditional</span><span>Formatting <Chevron /></span></BigButton>
        <BigButton $w={62}><FormatTableIcon /><span>Format as</span><span>Table <Chevron /></span></BigButton>
        <Gallery>
          <Tiles>
            <StyleTile $selected $bg="#fff" $fg="#000">Normal</StyleTile>
            <StyleTile $bg="#ffc7ce" $fg="#b0000c">Bad</StyleTile>
            <StyleTile $inset $bg="#c6efce" $fg="#0d6b10">Good</StyleTile>
            <StyleTile $bg="#ffeb9c" $fg="#a8640a">Neutral</StyleTile>
          </Tiles>
          <GalleryMore aria-label="More styles">
            <Svg w={8} stroke="#333"><path d="M0.500 1.500h7M1 4.500l3 2.500 3-2.500" strokeWidth="1.300" /></Svg>
          </GalleryMore>
        </Gallery>
      </RibbonGroup>

      <RibbonGroup name="Cells" width={147} pad={6}>
        <BigButton $w={44}><InsertIcon /><span>Insert</span><span><Chevron /></span></BigButton>
        <BigButton $w={46}><DeleteIcon /><span>Delete</span><span><Chevron /></span></BigButton>
        <BigButton $w={42}><FormatCellsIcon /><span>Format</span><span><Chevron /></span></BigButton>
      </RibbonGroup>

      <RibbonGroup name="Editing" width={216} pad={12}>
        <Rows>
          <Row $gap={12}><SmallButton $w={71}><SumIcon />AutoSum</SmallButton><Drop /></Row>
          <Row><SmallButton><FillIcon />Fill <Chevron /></SmallButton></Row>
          <Row><SmallButton><ClearIcon />Clear <Chevron /></SmallButton></Row>
        </Rows>
        <Row $h={79} $gap={0}>
          <Divider $h={0} />
          <BigButton $w={46}><SortIcon /><span>Sort &amp;</span><span>Filter <Chevron /></span></BigButton>
          <BigButton $w={46}><FindIcon /><span>Find &amp;</span><span>Select <Chevron /></span></BigButton>
        </Row>
      </RibbonGroup>

      <RibbonGroup name="Add-ins" width={63} center>
        <BigButton $w={50}><AddInsIcon /><span>Add-ins</span></BigButton>
      </RibbonGroup>
      <RibbonGroup name="" width={62} center>
        <BigButton $w={50}><AnalyzeIcon /><span>Analyze</span><span>Data</span></BigButton>
      </RibbonGroup>
      <RibbonGroup name="Adobe Acrobat" width={84} center>
        <BigButton $w={50}><PdfIcon /><span>Create</span><span>a PDF</span></BigButton>
      </RibbonGroup>
      <CollapseRibbon aria-label="Collapse ribbon"><BarChevron up /></CollapseRibbon>
    </Ribbon>
  );
}

const FunctionMark = styled.span`
  font: italic 18px/20px "Liberation Serif", serif;
  color: #222;
`;

function Formula() {
  const [formula, setFormula] = useState("AD.KON1");
  return (
    <FormulaBar>
      <BarBox $w={102}>
        <input aria-label="Name box" defaultValue="AY3" />
        <BarChevron />
      </BarBox>
      <BarDots><Svg w={2} h={12} fill="#333" stroke="none"><path d="M0 0h2v2H0zM0 5h2v2H0zM0 10h2v2H0z" /></Svg></BarDots>
      <BarBox $w={86}>
        <IconButton $w={12} aria-label="Cancel"><Svg w={12} stroke="#b5b5b5"><path d="m0 0 12 12M12 0 0 12" strokeWidth="1.200" /></Svg></IconButton>
        <IconButton $w={16} aria-label="Enter"><Svg w={16} h={12} stroke="#b5b5b5"><path d="m0 7 5 4.500L16 0.500" strokeWidth="1.200" /></Svg></IconButton>
        <IconButton aria-label="Insert function">
          <FunctionMark>fx</FunctionMark>
          <Svg w={9} h={6} stroke="#888"><path d="M0.500 0.500 4.500 5l4-4.500" /></Svg>
        </IconButton>
      </BarBox>
      <FormulaBox>
        <input aria-label="Formula" value={formula} onChange={(e) => setFormula(e.target.value)} />
        <BarChevron />
      </FormulaBox>
    </FormulaBar>
  );
}

function Grid() {
  return (
    <SheetArea>
      <GridClip>
        <Sheet $w={SHEET_WIDTH}>
          <colgroup>
            <col width={26} />
            {COLUMNS.map(([name, width]) => <col key={name} width={width} />)}
          </colgroup>
          <thead>
            <tr>
              <Corner><Svg w={12} stroke="none"><path d="M12 0v12H0z" fill="#dcdcdc" /></Svg></Corner>
              {COLUMNS.map(([name]) => <ColumnHead key={name} $active={name === "AY"}>{name}</ColumnHead>)}
            </tr>
          </thead>
          <tbody>
            {Array.from({ length: ROW_COUNT }, (_, r) => (
              <tr key={r}>
                <RowHead $active={r === 2} $mark={r === 8}>{r + 1}</RowHead>
                {COLUMNS.map(([name], c) => {
                  const value = ROWS[r]?.[c] ?? "";
                  const align = typeof value === "number" ? "right" : "left";
                  return <Cell key={name} $align={align} $scrolled={c === 0}>{value}</Cell>;
                })}
              </tr>
            ))}
          </tbody>
        </Sheet>
      </GridClip>
      <VScroll>
        <Svg w={10} h={8} stroke="none"><path d="m5 0 5 8H0z" fill="#666" /></Svg>
        <VThumb />
        <Svg w={10} h={14} stroke="none"><path d="m5 13 4.500-8h-9z" fill="#666" /></Svg>
      </VScroll>
    </SheetArea>
  );
}

function SheetTabs() {
  return (
    <SheetBar>
      <SheetNav>
        <IconButton $w={24} aria-label="Previous sheet"><Svg w={6} h={9} stroke="#999"><path d="M5.500 0.500 1 4.500l4.500 4" strokeWidth="1.300" /></Svg></IconButton>
        <IconButton $w={24} aria-label="Next sheet"><Svg w={6} h={9} stroke="#999"><path d="M0.500 0.500 5 4.500l-4.500 4" strokeWidth="1.300" /></Svg></IconButton>
      </SheetNav>
      <SheetTab><span>easalesorder</span></SheetTab>
      <SheetActions>
        <Divider $h={18} $m={4} />
        <IconButton $w={84} aria-label="New sheet"><Svg w={11} stroke="#333"><path d="M0 5.500h11M5.500 0v11" /></Svg></IconButton>
      </SheetActions>
      <BarDots><Svg w={2} h={32} fill="#333" stroke="none"><path d="M0 11h2v2H0zM0 15h2v2H0zM0 19h2v2H0z" /></Svg></BarDots>
      <HScroll>
        <Svg w={8} h={10} stroke="none"><path d="M0 5 7 0v10z" fill="#555" /></Svg>
        <HThumb />
        <Svg w={8} h={10} stroke="none"><path d="M8 5 1 0v10z" fill="#555" /></Svg>
      </HScroll>
    </SheetBar>
  );
}

function Status() {
  return (
    <StatusBar>
      <StatusItem $mr={20}>Ready</StatusItem>
      <StatusItem $mr={18} aria-label="Record macro">
        <Svg w={14} h={13} stroke="#222"><path d="M5 11.500H0.500V0.500h13v4M0.500 2.500h13M2.500 5h4M2.500 7.500h2" /><circle cx="9.500" cy="8.500" r="3.800" /><circle cx="9.500" cy="8.500" r="1.600" fill="#222" /></Svg>
      </StatusItem>
      <StatusItem>
        <Svg w={14} stroke="#222"><circle cx="6" cy="2" r="1.500" /><path d="M0.500 3 4 5v3l-2 5.500M11 3 8 5v3M6 9l1.500 4.500M10 7.500Q11 6 12.500 7t-1.500 3.500M11 13v1" strokeWidth="1.200" /></Svg>
        Accessibility: Unavailable
      </StatusItem>
      <StatusItem $push $mr={19}>
        <Svg w={14} h={13} stroke="#222"><path d="M5 9.500H0.500v-9h12v4M2 12h3" /><circle cx="10" cy="9" r="2.800" strokeDasharray="2 1" strokeWidth="1.500" /><circle cx="10" cy="9" r="1" /></Svg>
        Display Settings
      </StatusItem>
      <ViewButton $active aria-label="Normal view"><Svg w={13} stroke="#222"><path d="M0.500 0.500h12v12h-12zM0.500 4.500h12M0.500 8.500h12M4.500 0.500v12M8.500 0.500v12" /></Svg></ViewButton>
      <ViewButton aria-label="Page layout"><Svg w={13} stroke="#222"><path d="M0.500 0.500h12v12h-12zM3.500 2.500h6v8h-6zM5 5h3M5 7h3M5 9h3" /></Svg></ViewButton>
      <ViewButton aria-label="Page break preview"><Svg w={13} stroke="#222"><path d="M0.500 0.500h12v12h-12zM4.500 0.500v7h4v-7" /></Svg></ViewButton>
      <IconButton $w={16} aria-label="Zoom out"><Svg w={8} stroke="#222"><path d="M0 4.500h8" /></Svg></IconButton>
      <Zoom type="range" min="10" max="190" defaultValue="100" aria-label="Zoom" />
      <IconButton $w={8} aria-label="Zoom in"><Svg w={8} stroke="#222"><path d="M0 4.500h8M4.500 0v9" /></Svg></IconButton>
      <ZoomLevel>100%</ZoomLevel>
    </StatusBar>
  );
}

const RUNNING = [
  { name: "Task view", icon: <TaskViewIcon />, idle: true },
  { name: "Chat", icon: <ChatIcon />, idle: true },
  { name: "Firefox", icon: <FirefoxIcon /> },
  { name: "Outlook", icon: <OutlookIcon /> },
  { name: "ECI", icon: <EciIcon />, idle: true },
  { name: "File Explorer", icon: <ExplorerIcon /> },
  { name: "Phone", icon: <PetalsIcon />, badge: "9+", badgeBg: "#e8323c" },
  { name: "Teams", icon: <TeamsIcon />, badge: "3", bg: "#fbe4e6", dot: "#c42b1c" },
  { name: "Copilot", icon: <CopilotIcon /> },
  { name: "Word", icon: <WordIcon /> },
  { name: "Chrome", icon: <ChromeIcon /> },
  { name: "G", icon: <GIcon /> },
  { name: "Excel", icon: <ExcelIcon size={24} />, bg: "#ebeff8", dot: "#0078d4", wide: true },
];

function Tasks() {
  return (
    <Taskbar>
      <Weather><Sun /><span><b>34°F</b>Sunny</span></Weather>
      <Apps>
        <TaskButton aria-label="Start"><StartIcon /></TaskButton>
        <TaskSearch>
          <Svg w={15} stroke="#222"><circle cx="6.500" cy="6.500" r="5.500" strokeWidth="1.800" /><path d="m10.500 10.500 4 4" strokeWidth="2" /></Svg>
          <input type="search" placeholder="Search" aria-label="Search Windows" />
          <Highlight><BriefcaseIcon /></Highlight>
        </TaskSearch>
        {RUNNING.map(({ name, icon, idle, badge, badgeBg, bg, dot, wide }) => (
          <TaskButton key={name} aria-label={name} $bg={bg}>
            {icon}
            {badge && <Badge $bg={badgeBg}>{badge}</Badge>}
            {!idle && <Dot $color={dot} $wide={wide} />}
          </TaskButton>
        ))}
      </Apps>
      <Clock>10:07 AM<br />2/17/2025</Clock>
    </Taskbar>
  );
}

function App() {
  return (
    <Window>
      <GlobalStyle />
      <Title />
      <RibbonTabs />
      <RibbonPanel />
      <Formula />
      <Grid />
      <SheetTabs />
      <Status />
      <Tasks />
    </Window>
  );
}

export default App;
